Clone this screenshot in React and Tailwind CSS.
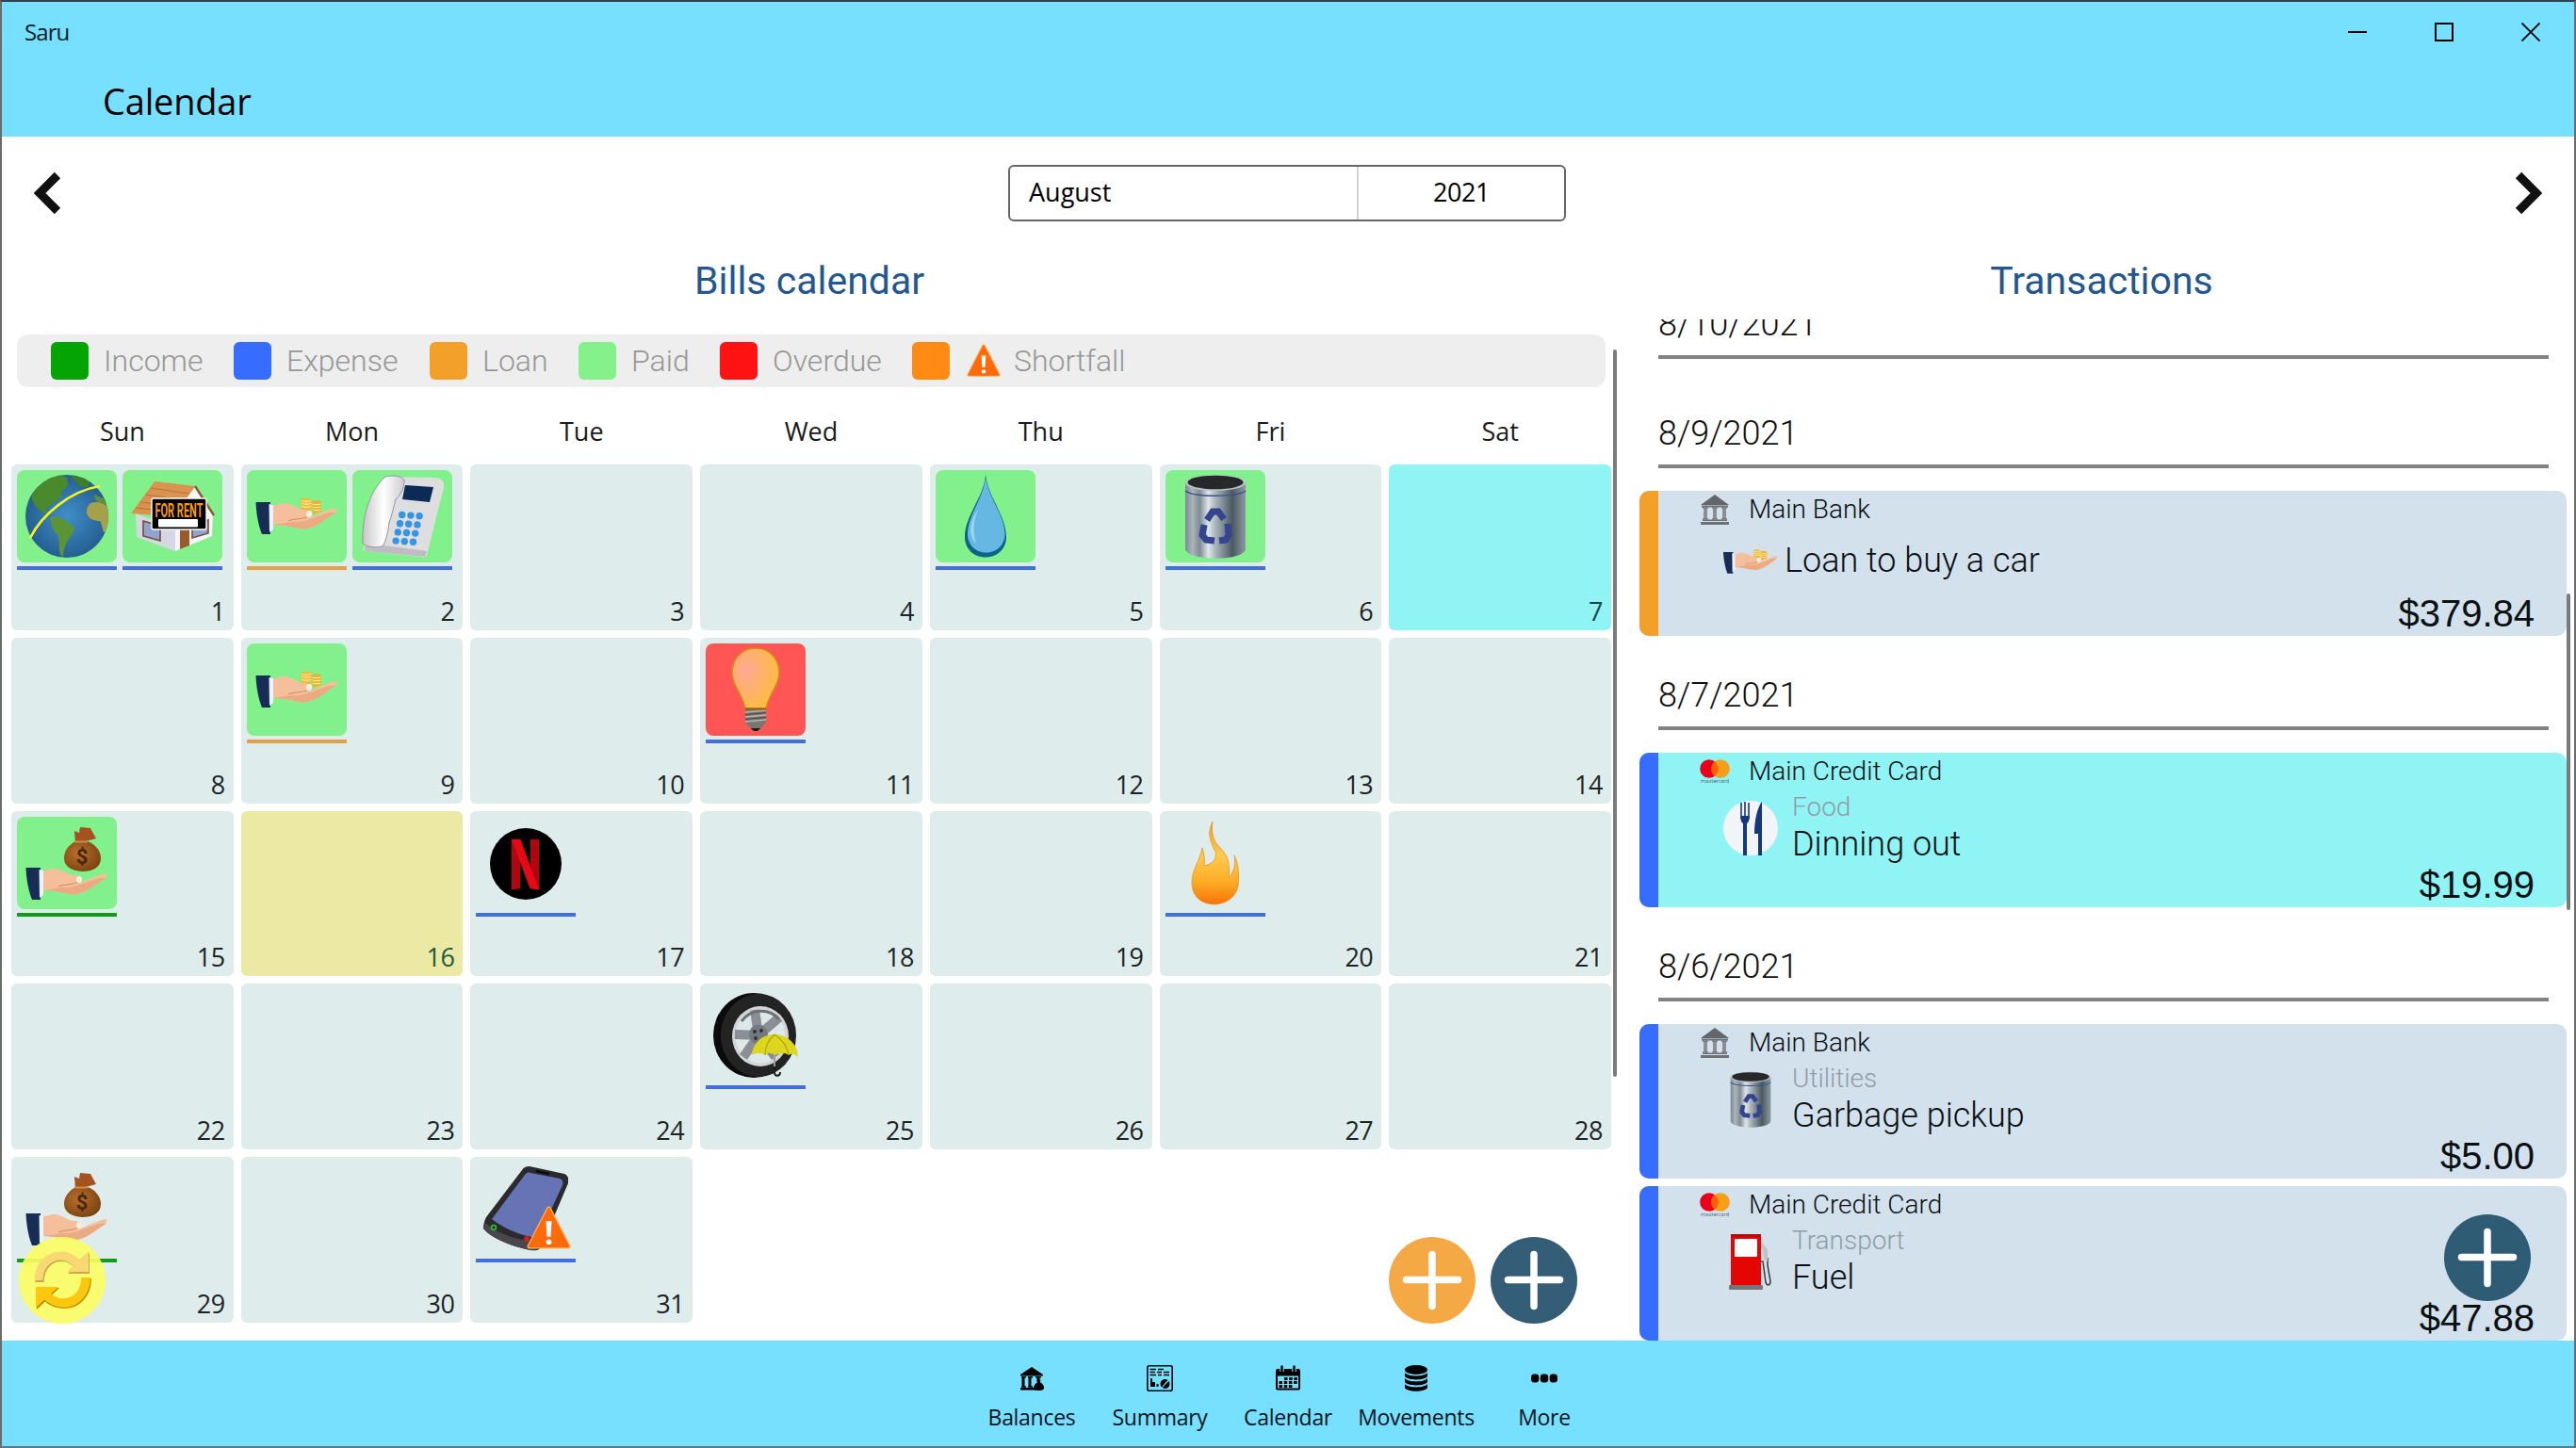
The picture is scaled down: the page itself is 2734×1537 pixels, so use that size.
const Globe = () => (
  <svg viewBox="0 0 90 90" className="w-[90px] h-[90px]">
    <defs>
      <radialGradient id="sea" cx="0.5" cy="0.5" r="0.55">
        <stop offset="0" stopColor="#3f8fc8" />
        <stop offset="1" stopColor="#235a8c" />
      </radialGradient>
      <clipPath id="globeClip"><circle cx="45" cy="45" r="44" /></clipPath>
    </defs>
    <circle cx="45" cy="45" r="44" fill="url(#sea)" />
    <g clipPath="url(#globeClip)">
      <path d="M8 22 C14 12 24 4 36 1 L46 4 C44 8 48 12 44 15 C40 17 38 20 39 24 C35 29 30 30 28 33 C26 36 22 36 22 38 L27 41 L26 44 C18 41 11 36 8 27 Z" fill="#4a8a2c" />
      <path d="M50 2 C58 0 66 4 70 8 L66 14 L58 13 C56 9 52 8 50 2 Z" fill="#3f7d2e" />
      <path d="M28 46 C32 44 36 45 41 48 C46 51 52 54 53 58 C51 64 48 68 45 72 C43 77 41 82 41 88 L38 86 C36 80 38 72 35 65 C31 60 27 54 28 46 Z" fill="#5a9436" />
      <path d="M74 22 L84 26 L88 34 L82 33 C78 30 74 28 74 22 Z" fill="#5f8f3a" />
      <path d="M69 32 C74 28 82 30 90 36 L90 60 L84 62 C82 56 82 53 80 50 C74 50 68 48 66 42 C66 38 66 36 69 32 Z" fill="#a7a04a" />
    </g>
    <path d="M6 68 C18 44 48 18 80 13" fill="none" stroke="#f4f31c" strokeWidth="2.6" />
  </svg>
);

const House = () => (
  <svg viewBox="0 0 90 90" className="w-[90px] h-[90px]">
    <path d="M6 42 L48 58 L48 82 L7 67 Z" fill="#d5d7e2" />
    <path d="M48 58 L52 36 L69 14 L88 42 L87 66 L48 82 Z" fill="#f6f6fa" />
    <path d="M26 8 L69 13 L53 36 L50 46 L1 42 Z" fill="#d9924f" />
    <path d="M22 15 L63 21 M17 22 L58 28 M11 30 L54 35 M6 36 L51 41" stroke="#b8733a" strokeWidth="1" />
    <path d="M69 13 L89 44" stroke="#8a5a35" strokeWidth="2.4" />
    <path d="M14 50 L32 55 L32 71 L14 66 Z" fill="#8fa3cf" stroke="#7a4b32" strokeWidth="1.6" />
    <path d="M66 55 L83 49 L83 63 L66 68 Z" fill="#8fa3cf" stroke="#7a4b32" strokeWidth="1.6" />
    <path d="M53 58 L63 55 L63 76 L53 80 Z" fill="#9a5a2c" />
    <rect x="23" y="26" width="58" height="33" rx="2" fill="#000" stroke="#fff" strokeWidth="1.4" />
    <g transform="translate(52 46) scale(1 1.9)">
      <text x="0" y="0" textAnchor="middle" fontSize="11" fontWeight="700" fill="#f59a16" fontFamily="Roboto, sans-serif">FOR RENT</text>
    </g>
    <rect x="30" y="48" width="42" height="8.5" rx="1" fill="#fff" />
  </svg>
);

const HandShape = () => (
  <>
    <path d="M20 33 C26 33 29 30 35 31.500 C42 33 46 38 54 38 C60 39 62 42 59 45 L54 48 C64 45 74 39 85 36 C88 36 88 40 85 42 C75 48 66 57 53 58.500 C42 58 34 54 20 54 Z" fill="#f5bf9c" />
    <path d="M40 51 C50 52 60 48 70 44 C78 41 82 40 86 41 C75 48 66 57 53 58.500 C42 58 34 54 20 54 Z" fill="#ecaa82" />
    <path d="M36 50 C42 47 52 49 59 44" fill="none" stroke="#d08a64" strokeWidth="1" />
    <ellipse cx="58" cy="42.500" rx="3" ry="3.600" fill="#fdebdd" />
    <path d="M1.500 30 L17 30 L17 64 L8 64 C4 54 2 42 1.500 30 Z" fill="#172d56" />
    <path d="M15.500 32 L20 33 L20 59 L16 62 Z" fill="#eef2fb" />
  </>
);

const CoinsHand = ({ className = 'w-[90px] h-[90px]' }) => (
  <svg viewBox="0 0 90 90" className={className}>
    <HandShape />
    <path d="M49.500 27 Q55 24.500 60.500 27 V38.500 Q57 39.500 49.500 37.500 Z" fill="#f2b93c" />
    <path d="M61 29.500 Q66 27 71 29.500 V40 L62 43 Z" fill="#edb033" />
    <path d="M50 28.500 Q55 30 60 28.500 M50 31.500 Q55 33 60 31.500 M50 34.500 Q55 36 60 34.500 M61.500 32 Q66 33.500 70.500 32 M61.500 35 Q66 36.500 70.500 35 M62 38 Q66 39.500 70.500 38" fill="none" stroke="#ffeb94" strokeWidth="1.300" />
    <ellipse cx="58" cy="42.500" rx="3" ry="3.600" fill="#fdebdd" />
  </svg>
);

const MoneyHand = () => (
  <svg viewBox="0 0 90 90" className="w-[90px] h-[90px]">
    <defs>
      <radialGradient id="bag" cx="0.4" cy="0.4" r="0.65">
        <stop offset="0" stopColor="#b8702f" />
        <stop offset="1" stopColor="#7c4310" />
      </radialGradient>
    </defs>
    <path d="M59 7 L70 8 L76 19 L65 22 L67 24 L54 24 L53 11 L58 13 Z" fill="#a5521f" />
    <path d="M54 22 L67 22 C75 25 81 32 81 40 C81 50 72 54 61 54 C50 53 42 49 42 40 C42 32 47 26 54 22 Z" fill="url(#bag)" />
    <path d="M53 22.500 L67 22.500" stroke="#c99142" strokeWidth="2" />
    <text x="61" y="46" textAnchor="middle" fontSize="22" fontWeight="700" fill="#4a2606" fontFamily="Roboto, sans-serif">$</text>
    <g transform="translate(0 20)"><HandShape /></g>
  </svg>
);

const DeskPhone = () => (
  <svg viewBox="0 0 90 90" className="w-[90px] h-[90px]">
    <defs>
      <linearGradient id="handset" x1="0" x2="1">
        <stop offset="0" stopColor="#c6c6c9" />
        <stop offset="0.500" stopColor="#ffffff" />
        <stop offset="1" stopColor="#cdcdd0" />
      </linearGradient>
    </defs>
    <path d="M28 3 L78 4 C86 4 90 8 89 14 L71 86 C70 89 68 89 65 88 L6 82 C3 81 3 79 4 76 Z" fill="#dedee1" />
    <path d="M26 76 L71 82 L69 88 L6 82 L4 77 Z" fill="#bebec2" />
    <path d="M27 3 C34 1 46 2 47 7 C47 14 44 22 38 27 C36 34 34 44 31 52 C30 62 28 68 25 76 C21 79 7 78 3 74 C2 50 8 20 27 3 Z" fill="url(#handset)" stroke="#97979b" strokeWidth="1" />
    <path d="M48 12 L78 14 L74 30 L45 27 Z" fill="#0b2a55" />
    {[0, 1, 2, 3].map((row) =>
      [0, 1, 2].map((col) => (
        <circle key={`${row}-${col}`} cx={44.7 + col * 9.2 - row * 2.2} cy={43.5 + row * 9.2 + col * 0.6} r="3.700" fill="#3494e6" />
      ))
    )}
  </svg>
);

const Drop = () => (
  <svg viewBox="0 0 90 90" className="w-[90px] h-[90px]">
    <path d="M45 0 C47 24 67 44 67 67 C67 80 57 88.500 45 88.500 C33 88.500 23 80 23 67 C23 44 44 24 45 0 Z" fill="#0d6484" />
    <path d="M45 3 C48 26 65.500 44 65.500 64 C65.500 76 56 83.500 46 83.500 C35 83.500 26 76 26 64 C26 44 43 26 45 3 Z" fill="#66b8e2" />
    <path d="M37 38 C27 52 27 66 35 74 C31 62 32 50 37 38 Z" fill="#9bd6f2" />
  </svg>
);

const TrashCan = ({ className = 'w-[90px] h-[90px]' }) => (
  <svg viewBox="0 0 90 90" className={className}>
    <defs>
      <linearGradient id="steel" x1="0" x2="1">
        <stop offset="0" stopColor="#7d8a91" />
        <stop offset="0.120" stopColor="#aab5bb" />
        <stop offset="0.240" stopColor="#7f8c94" />
        <stop offset="0.380" stopColor="#dfe6ea" />
        <stop offset="0.500" stopColor="#a9b5bb" />
        <stop offset="0.780" stopColor="#4a5962" />
        <stop offset="1" stopColor="#8e9aa1" />
      </linearGradient>
    </defs>
    <path d="M13 10 L77 10 L77 80 C74 93 16 93 13 80 Z" fill="url(#steel)" />
    <ellipse cx="45" cy="9.500" rx="32" ry="8.500" fill="#b9c1c5" />
    <ellipse cx="45" cy="9" rx="29.500" ry="7.300" fill="#26282a" />
    <path d="M13 18 C22 25 68 25 77 18" fill="none" stroke="#3b4c93" strokeWidth="1.500" />
    <g fill="none" stroke="#34448f" strokeWidth="7">
      <path d="M36 49 L42 40 L48 40 L54 48" />
      <path d="M58 53 L59 65 L56 70 L49 71" />
      <path d="M44 71 L35 70 L31 65 L33 54" />
    </g>
  </svg>
);

const Bulb = () => (
  <svg viewBox="0 0 90 90" className="w-[90px] h-[90px]">
    <defs>
      <radialGradient id="glow" cx="0.300" cy="0.380" r="0.650">
        <stop offset="0" stopColor="#ffa795" />
        <stop offset="1" stopColor="#fdbb45" />
      </radialGradient>
    </defs>
    <path d="M45 1 C60 1 70 13 70 27 C70 41 60 47 56 65 L34 65 C30 47 20 41 20 27 C20 13 30 1 45 1 Z" fill="url(#glow)" stroke="#d98a1c" strokeWidth="1.600" />
    <path d="M34 65 H56 V80 L49 88 H41 L34 80 Z" fill="#7b7670" />
    <path d="M34 69 L56 67 M34 74 L56 72 M34 79 L56 77" stroke="#b8b3ab" strokeWidth="1.400" />
    <path d="M34 71.500 L56 69.500 M34 76.500 L56 74.500" stroke="#4c4843" strokeWidth="1.200" />
    <path d="M34 65.500 H56" stroke="#9a5d0c" strokeWidth="2" />
    <path d="M40 86 H50 L47 89 H43 Z" fill="#1d1a17" />
  </svg>
);

const Netflix = () => (
  <svg viewBox="0 0 90 90" className="w-[90px] h-[90px]">
    <circle cx="45" cy="46" r="38" fill="#000" />
    <path d="M30 20 H39 V72 L30 73.500 Z M50 20 H59 V73 L50 72 Z" fill="#b1060f" />
    <path d="M30 20 H39.500 L59 73.500 L49.500 72 Z" fill="#e50914" />
  </svg>
);

const Flame = () => (
  <svg viewBox="0 0 90 90" className="w-[90px] h-[90px]">
    <defs>
      <linearGradient id="fire" x1="0" y1="0" x2="0" y2="1">
        <stop offset="0" stopColor="#f49b2c" />
        <stop offset="0.400" stopColor="#ffcb4e" />
        <stop offset="0.720" stopColor="#fdae27" />
        <stop offset="1" stopColor="#fb7306" />
      </linearGradient>
    </defs>
    <path d="M42 1 C40 14 43 22 50 29 C57 36 61 44 59 61 C64 55 67 47 65 37 C70 46 70 58 69 70 C66 83 54 89 43 89 C28 88 20 79 20 66 C20 52 28 44 31 29 C33 36 34 42 33 48 C42 46 47 41 45 33 C41 24 35 16 42 1 Z" fill="url(#fire)" stroke="#ec8f1f" strokeWidth="0.800" />
  </svg>
);

const Wheel = () => (
  <svg viewBox="0 0 90 90" className="w-[90px] h-[90px]">
    <ellipse cx="43" cy="45" rx="43" ry="45" fill="#0b0b0b" />
    <ellipse cx="48" cy="45" rx="40" ry="44" fill="#232323" />
    <ellipse cx="50" cy="46" rx="30" ry="32" fill="#d2d4d6" />
    <ellipse cx="50" cy="46" rx="26.500" ry="28.500" fill="#dde8e8" />
    <g stroke="#8b8f95" strokeWidth="10">
      <path d="M48 45 L44 18" />
      <path d="M48 45 L70 26" />
      <path d="M48 45 L23 44" />
      <path d="M48 45 L32 68" />
      <path d="M48 45 L66 68" />
    </g>
    <path d="M30 30 A26.500 28.500 0 0 1 70 28" fill="none" stroke="#6d7176" strokeWidth="3" />
    <ellipse cx="48" cy="44" rx="10" ry="10.500" fill="#75797f" />
    <g fill="#2a2d31">
      <circle cx="44" cy="41" r="1.900" /><circle cx="51" cy="40" r="1.900" /><circle cx="45" cy="48" r="1.900" />
    </g>
    <path d="M65 64 V84 C65 89 71 89 71 84" fill="none" stroke="#1b1b1b" strokeWidth="2" />
    <path d="M65 64 V78" stroke="#b9bcc0" strokeWidth="1.600" />
    <path d="M41 66 C42 53 52 44 65 44 C78 44 90 54 90 68 C86 64 83 64 80 66 C76 63 70 63 66 66 C61 63 58 63 55 66 C50 63 46 63 41 66 Z" fill="#dcd61d" />
    <path d="M65 44 C58 50 55 58 55 66 M65 44 C74 50 79 58 80 66" fill="none" stroke="#aaa40f" strokeWidth="1.200" />
  </svg>
);

const Warning = ({ className }) => (
  <svg viewBox="0 0 46 46" className={className}>
    <path d="M23 3 L43 42 H3 Z" fill="#ff6a0a" stroke="#ffb25c" strokeWidth="5" strokeLinejoin="round" />
    <path d="M23 3 L43 42 H3 Z" fill="#ff6a0a" stroke="#ff6a0a" strokeWidth="2.500" strokeLinejoin="round" />
    <path d="M20 16 H26 L25 32 H21 Z" fill="#fff" />
    <circle cx="23" cy="37.500" r="2.800" fill="#fff" />
  </svg>
);

const Smartphone = () => (
  <div className="relative w-[90px] h-[90px]">
    <svg viewBox="0 0 90 90" className="w-[90px] h-[90px]">
      <path d="M49 0 L86 8 C90 10 91 13 90 18 L62 84 C60 89 56 90 50 89 C30 85 8 76 0 66 C0 62 1 58 3 54 L41 4 C43 1 45 0 49 0 Z" fill="#2b2b2e" />
      <path d="M2 60 C16 72 38 80 60 80 L58 87 C54 90 50 89 46 88 C28 84 8 76 0 66 Z" fill="#48484c" />
      <path d="M50 7 L81 13 C84 14 85 17 84 20 L58 76 C40 74 22 66 9 56 L44 9 C46 7 47 6 50 7 Z" fill="#6673b5" />
      <path d="M56 5 L70 8" stroke="#0c0c0e" strokeWidth="2.500" />
      <circle cx="11" cy="65" r="2.400" fill="none" stroke="#2fc431" strokeWidth="1.500" />
      <circle cx="46" cy="77" r="3" fill="#d81b1b" />
    </svg>
    <Warning className="absolute left-[46px] top-[42px] w-[47px] h-[47px]" />
  </div>
);

const BankIcon = () => (
  <svg viewBox="0 0 32 32" className="w-8 h-8">
    <path d="M16 0 L31 11 H1 Z" fill="#63666b" />
    <path d="M2 11.500 H30 V13.500 H2 Z M1 29 H31 V32 H1 Z M3 26.500 H29 V28 H3 Z" fill="#6d7075" />
    <path d="M4 14 H8 V26 H4 Z M14 14 H18 V26 H14 Z M24 14 H28 V26 H24 Z" fill="#8b8e92" />
    <path d="M3 14 H9 M13 14 H19 M23 14 H29 M3 26 H9 M13 26 H19 M23 26 H29" stroke="#76797e" strokeWidth="1.500" />
  </svg>
);

const Mastercard = () => (
  <svg viewBox="0 0 32 32" className="w-8 h-8">
    <circle cx="10" cy="13" r="9.800" fill="#eb001b" />
    <circle cx="22" cy="13" r="9.800" fill="#f79e1b" />
    <path d="M16 5.300 A9.800 9.800 0 0 1 16 20.700 A9.800 9.800 0 0 1 16 5.300 Z" fill="#ff5f00" />
    <text x="16" y="28" textAnchor="middle" textLength="30" fontSize="6" fill="#2c3a44" fontFamily="Roboto, sans-serif">mastercard</text>
  </svg>
);

const Cutlery = () => (
  <svg viewBox="0 0 60 60" className="w-[60px] h-[60px]">
    <circle cx="30" cy="30" r="29" fill="#f1f5f8" />
    <path d="M20 3 V20 M24 2 V20 M28 3 V20" stroke="#17377c" strokeWidth="1.600" />
    <path d="M19.500 17 H28.500 C29 23 27 24.500 26 25 V59 H22 V25 C21 24.500 19 23 19.500 17 Z" fill="#17377c" />
    <path d="M42 2 V59 H38 V36 H34 C34 22 37 8 42 2 Z" fill="#17377c" />
  </svg>
);

const FuelPump = () => (
  <svg viewBox="0 0 60 60" className="w-[60px] h-[60px]">
    <path d="M40 30 H43 L46 52 C47 56 51 56 51 51 L48 34 V26" fill="none" stroke="#3c3c40" strokeWidth="1.500" />
    <path d="M40 8 L48 17 L48 30 L44 28 L43 18 L40 12 Z" fill="#bfc3c6" />
    <rect x="9" y="1" width="32" height="55" rx="1.500" fill="#e50505" />
    <path d="M9 1 H41 V4 H9 Z" fill="#b90a0a" />
    <rect x="13" y="6" width="24" height="19" rx="1" fill="#fff" />
    <rect x="7" y="55" width="36" height="5" rx="1" fill="#757575" />
  </svg>
);

const PlusIcon = () => (
  <svg viewBox="0 0 92 92" className="w-[92px] h-[92px]">
    <path d="M46 18.500 V73.500 M18.500 45.500 H73.500" stroke="#fff" strokeWidth="7.500" strokeLinecap="round" />
  </svg>
);

const Chevron = ({ className }) => (
  <svg viewBox="0 0 30 46" className={className}>
    <path d="M25 4 L6 23 L25 42" fill="none" stroke="#111" strokeWidth="9" />
  </svg>
);

const BalancesIcon = () => (
  <svg viewBox="0 0 28 28" className="w-7 h-7">
    <path d="M14 2 L26 10 V11.500 H2 V10 Z M3 24 H18 V26.500 H2 V24 Z" />
    <path d="M5 13 V23 M12 13 V23 M21 13 V18" stroke="#000" strokeWidth="3" />
    <path d="M3 12.800 H8 M10 12.800 H15 M18 12.800 H24 M3 23 H8 M10 23 H15" stroke="#000" strokeWidth="1.400" />
    <path d="M19.500 15.500 H23.500 L22.800 18 C26 20 27 22 27 24 C27 26 25.500 27 21.500 27 C17.500 27 16 26 16 24 C16 22 17.500 20 20.200 18 Z" />
  </svg>
);

const SummaryIcon = () => (
  <svg viewBox="0 0 28 28" className="w-7 h-7">
    <rect x="0.800" y="0.800" width="26.400" height="26.400" rx="2" fill="none" stroke="#000" strokeWidth="1.600" />
    <path d="M3.500 4.500 H10 M12 4.500 H18 M3.500 7.500 H9 M11 7.500 H16 M18 7.500 H24 M3.500 10.500 H10 M12 10.500 H16 M18 10.500 H24" stroke="#000" strokeWidth="1.300" />
    <path d="M4 14 H6 V18 H9 V23 H4 Z M10.500 20 H12.500 V23 H10.500 Z" />
    <circle cx="19.500" cy="20" r="5" />
    <path d="M19.500 20 L24 15.500 M19.500 20 L16.500 24" stroke="#77dfff" strokeWidth="1.200" />
  </svg>
);

const CalendarIcon = () => (
  <svg viewBox="0 0 28 28" className="w-7 h-7">
    <path d="M3 4 H25 C26.500 4 27 5 27 6 V24.500 C27 26 26 26.500 25 26.500 H3 C1.500 26.500 1 25.500 1 24.500 V6 C1 5 1.500 4 3 4 Z" />
    <path d="M3 11.500 H25 V24.500 H3 Z" fill="#77dfff" />
    <path d="M7.500 1.500 V7 M20.500 1.500 V7" stroke="#77dfff" strokeWidth="4.500" />
    <path d="M7.500 1.500 V6.500 M20.500 1.500 V6.500" stroke="#000" strokeWidth="2.400" strokeLinecap="round" />
    <path d="M10 14.500 H24 M4.500 18.500 H24 M4.500 22.500 H19" stroke="#000" strokeWidth="2.800" strokeDasharray="3.500 1.700" />
  </svg>
);

const MovementsIcon = () => (
  <svg viewBox="0 0 28 28" className="w-7 h-7">
    <ellipse cx="14" cy="5" rx="12" ry="5" />
    <path d="M2 8 C5 12.500 23 12.500 26 8 V12 C23 16.500 5 16.500 2 12 Z M2 14 C5 18.500 23 18.500 26 14 V18 C23 22.500 5 22.500 2 18 Z M2 20 C5 24.500 23 24.500 26 20 V24 C23 29 5 29 2 24 Z" />
  </svg>
);

const MoreIcon = () => (
  <svg viewBox="0 0 28 28" className="w-7 h-7">
    <rect x="0" y="9.500" width="8.400" height="9" rx="3.400" />
    <rect x="9.800" y="9.500" width="8.400" height="9" rx="3.400" />
    <rect x="19.600" y="9.500" width="8.400" height="9" rx="3.400" />
  </svg>
);

const RefreshIcon = () => (
  <svg viewBox="0 0 92 92" className="w-[92px] h-[92px]">
    <path d="M22 48 C22 30 34 20 48 21 C54 22 59 25 64 31" fill="none" stroke="#c9a94e" strokeWidth="9.500" />
    <path d="M75 17 V39 H52 Z" fill="#c9a94e" />
    <path d="M21 46 C21 29 33 19 47 20 C53 21 58 24 63 30" fill="none" stroke="#f7d873" strokeWidth="9" />
    <path d="M74 15 V37 H51 Z" fill="#f7d873" />
    <path d="M72 44 C72 60 62 71 48 71 C41 71 35 69 29 63" fill="none" stroke="#b98e0c" strokeWidth="10" />
    <path d="M19 77 V54 H43 Z" fill="#b98e0c" />
    <path d="M71 43 C71 59 61 70 47 70 C40 70 34 67 28 61" fill="none" stroke="#fcc80d" strokeWidth="9.500" />
    <path d="M18 75 V53 H42 Z" fill="#fcc80d" />
  </svg>
);

const legend = [
  { label: 'Income', color: 'bg-[#05a405]', width: 'w-[194px]' },
  { label: 'Expense', color: 'bg-[#366cff]', width: 'w-[208px]' },
  { label: 'Loan', color: 'bg-[#f3a02a]', width: 'w-[158px]' },
  { label: 'Paid', color: 'bg-[#85f18a]', width: 'w-[150px]' },
  { label: 'Overdue', color: 'bg-[#ff1212]', width: 'w-[204px]' },
  { label: 'Shortfall', color: 'bg-[#ff8a14]', width: 'w-[260px]', warn: true },
];

const weekdays = ['Sun', 'Mon', 'Tue', 'Wed', 'Thu', 'Fri', 'Sat'];

const PAID = 'bg-[#83f18b]';
const OVERDUE = 'bg-[#ff5555]';
const EXPENSE = 'bg-[#416fdc]';
const LOAN = 'bg-[#e2a148]';
const INCOME = 'bg-[#149a1b]';

const bills = {
  1: [{ icon: Globe, tile: PAID, line: EXPENSE }, { icon: House, tile: PAID, line: EXPENSE }],
  2: [{ icon: CoinsHand, tile: PAID, line: LOAN }, { icon: DeskPhone, tile: PAID, line: EXPENSE }],
  5: [{ icon: Drop, tile: PAID, line: EXPENSE }],
  6: [{ icon: TrashCan, tile: PAID, line: EXPENSE }],
  9: [{ icon: CoinsHand, tile: PAID, line: LOAN }],
  11: [{ icon: Bulb, tile: OVERDUE, line: EXPENSE }],
  15: [{ icon: MoneyHand, tile: PAID, line: INCOME }],
  17: [{ icon: Netflix, tile: '', line: EXPENSE }],
  20: [{ icon: Flame, tile: '', line: EXPENSE }],
  25: [{ icon: Wheel, tile: '', line: EXPENSE }],
  29: [{ icon: MoneyHand, tile: '', line: INCOME }],
  31: [{ icon: Smartphone, tile: '', line: EXPENSE }],
};

const dayStyles = {
  7: 'bg-[#90f4f4] text-[#12494b]',
  16: 'bg-[#ece9a4] text-[#1c5a41]',
};

const groups = [
  { date: '8/10/2021', items: [] },
  {
    date: '8/9/2021',
    items: [
      { account: 'Main Bank', bank: true, title: 'Loan to buy a car', amount: '$379.84', icon: <CoinsHand className="w-[60px] h-[60px]" />, bar: 'bg-[#f3a02a]', bg: 'bg-[#d2e1ec]' },
    ],
  },
  {
    date: '8/7/2021',
    items: [
      { account: 'Main Credit Card', category: 'Food', title: 'Dinning out', amount: '$19.99', icon: <Cutlery />, bar: 'bg-[#366cff]', bg: 'bg-[#90f4f5]' },
    ],
  },
  {
    date: '8/6/2021',
    items: [
      { account: 'Main Bank', bank: true, category: 'Utilities', title: 'Garbage pickup', amount: '$5.00', icon: <TrashCan className="w-[60px] h-[60px]" />, bar: 'bg-[#366cff]', bg: 'bg-[#d2e1ec]' },
      { account: 'Main Credit Card', category: 'Transport', title: 'Fuel', amount: '$47.88', icon: <FuelPump />, bar: 'bg-[#366cff]', bg: 'bg-[#d2e1ec]' },
    ],
  },
];

const navItems = [
  { label: 'Balances', icon: BalancesIcon },
  { label: 'Summary', icon: SummaryIcon },
  { label: 'Calendar', icon: CalendarIcon },
  { label: 'Movements', icon: MovementsIcon },
  { label: 'More', icon: MoreIcon },
];

const DayCell = ({ day }) => (
  <div className={`flex flex-col justify-between rounded-md p-1.5 ${dayStyles[day] || 'bg-[#deedec] text-[#1c2425]'}`}>
    <div className="flex gap-1.5">
      {(bills[day] || []).map((bill, i) => (
        <div key={i} className="flex flex-col gap-1">
          <div className={`flex items-center justify-center w-[106px] h-[98px] rounded-lg ${bill.tile}`}>
            <bill.icon />
          </div>
          <div className={`h-1 ${bill.line}`} />
        </div>
      ))}
    </div>
    <span className="self-end pr-[3px] text-[27px] leading-[29px] tracking-[-0.5px]">{day}</span>
  </div>
);

const TransactionCard = ({ item }) => (
  <div className={`flex rounded-[10px] overflow-hidden ${item.bg}`}>
    <div className={`w-5 shrink-0 ${item.bar}`} />
    <div className="flex-1 pb-[3px] text-[#0b1013]">
      <div className="flex items-center h-10 gap-5 pl-11">
        {item.bank ? <BankIcon /> : <Mastercard />}
        <span className="text-[28px] leading-9">{item.account}</span>
      </div>
      <div className={`flex items-center min-h-[69px] pl-[68px] ${item.category ? 'gap-3.5' : 'gap-1.5'}`}>
        {item.icon}
        <div>
          {item.category && <div className="text-[28px] leading-9 text-[#8f9ea6]">{item.category}</div>}
          <div className="text-[36px] leading-[43px]">{item.title}</div>
        </div>
      </div>
      <div className="pr-[34px] text-right font-['Liberation_Sans',sans-serif] text-[40px] leading-[42px] font-normal">{item.amount}</div>
    </div>
  </div>
);

const App = () => (
  <div className="flex flex-col w-[2734px] h-[1537px] overflow-hidden bg-white border-2 border-t-[#2c4350] border-x-[#6b6b6b] border-b-[#5d7a87] font-['Open_Sans',sans-serif] text-black">
    {/* Title bar */}
    <header className="h-[143px] bg-[#77dfff]">
      <div className="flex items-center justify-between h-16 pl-6 pr-9">
        <span className="text-[24px] leading-8 tracking-[-0.9px] text-[#0d1b22]">Saru</span>
        <div className="flex items-center gap-[72px]">
          <svg viewBox="0 0 20 20" className="w-5 h-5"><path d="M0 10 H20" stroke="#000" strokeWidth="2" /></svg>
          <svg viewBox="0 0 20 20" className="w-5 h-5"><rect x="1" y="1" width="18" height="18" fill="none" stroke="#000" strokeWidth="2" /></svg>
          <svg viewBox="0 0 20 20" className="w-5 h-5"><path d="M0.500 0.500 L19.500 19.500 M19.500 0.500 L0.500 19.500" stroke="#000" strokeWidth="1.800" /></svg>
        </div>
      </div>
      <h1 className="flex items-center h-[79px] pt-0.5 pl-[107px] text-[38px] leading-none tracking-[-0.2px]">Calendar</h1>
    </header>

    {/* Month picker */}
    <div className="flex items-center justify-between h-[120px] shrink-0 pl-[34px] pr-[34px]">
      <Chevron className="w-[30px] h-[46px]" />
      <div className="flex w-[592px] h-[60px] border-2 border-[#666] rounded-md text-[27px] leading-[54px] -translate-x-px">
        <span className="w-[370px] pl-5 border-r-2 border-[#d2d2d2]">August</span>
        <span className="flex-1 text-center tracking-[-0.5px]">2021</span>
      </div>
      <Chevron className="w-[30px] h-[46px] rotate-180" />
    </div>

    <main className="relative flex flex-1 min-h-0">
      {/* Bills calendar */}
      <section className="w-[1714px]">
        <h2 className="text-center font-['Roboto',sans-serif] text-[41px] leading-[66px] text-[#24568f]">Bills calendar</h2>
        <div className="flex items-center w-[1686px] h-14 mt-6 ml-4 pl-9 rounded-xl bg-[#eeeeee] font-['Roboto',sans-serif] font-light text-[32px] text-[#979797]">
          {legend.map((item) => (
            <div key={item.label} className={`flex items-center ${item.warn ? 'gap-3.5' : 'gap-4'} ${item.width}`}>
              <span className={`w-10 h-10 shrink-0 rounded-md ${item.color}`} />
              {item.warn && <Warning className="w-9 h-9 shrink-0 ml-1" />}
              <span className="leading-10">{item.label}</span>
            </div>
          ))}
        </div>
        <div className="grid grid-cols-7 gap-2 items-center w-[1698px] h-[82px] ml-2.5 pt-3 text-center text-[27px] text-[#1b1b1b]">
          {weekdays.map((name) => <span key={name}>{name}</span>)}
        </div>
        <div className="grid grid-cols-7 grid-rows-5 gap-2 w-[1698px] h-[911px] ml-2.5">
          {Array.from({ length: 31 }, (_, i) => <DayCell key={i} day={i + 1} />)}
        </div>
      </section>

      {/* Transactions */}
      <section className="flex flex-col flex-1 min-w-0 font-['Roboto',sans-serif]">
        <h2 className="pl-[13px] text-center text-[41px] leading-[66px] text-[#24568f]">Transactions</h2>
        <div className="flex-1 min-h-0 mt-2 pl-6 pr-2 overflow-hidden font-light">
          <div className="-mt-[58px]">
            {groups.map((group) => (
              <div key={group.date} className={group.items.length ? '' : 'pb-4'}>
                <div className="flex items-end h-[100px] ml-5 mr-[19px] pb-3 border-b-4 border-[#828282] text-[36px] leading-[42px] text-[#111]">{group.date}</div>
                {group.items.length > 0 && (
                  <div className="flex flex-col gap-2 mt-6">
                    {group.items.map((item) => <TransactionCard key={item.amount} item={item} />)}
                  </div>
                )}
              </div>
            ))}
          </div>
        </div>
      </section>

      {/* Scroll thumbs */}
      <div className="absolute left-[1710px] top-[106px] w-1 h-[772px] rounded-full bg-[#7b7b7b]" />
      <div className="absolute left-[2722px] top-[365px] w-1 h-[336px] rounded-full bg-[#7b7b7b]" />

      {/* Floating buttons */}
      <button className="absolute left-[18px] bottom-[18px] w-[92px] h-[92px] rounded-full bg-[#fdfd62]/90"><RefreshIcon /></button>
      <button className="absolute left-[1472px] bottom-[18px] w-[92px] h-[92px] rounded-full bg-[#f5a945]"><PlusIcon /></button>
      <button className="absolute left-[1580px] bottom-[18px] w-[92px] h-[92px] rounded-full bg-[#345e77]"><PlusIcon /></button>
      <button className="absolute left-[2592px] bottom-[42px] w-[92px] h-[92px] rounded-full bg-[#2f5c75]"><PlusIcon /></button>
    </main>

    {/* Bottom tabs */}
    <nav className="flex justify-center h-28 shrink-0 bg-[#77dfff]">
      {navItems.map((item) => (
        <div key={item.label} className="flex flex-col items-center gap-[11px] w-[136px] pt-[26px]">
          <item.icon />
          <span className="text-[23px] leading-8 tracking-[-0.3px] text-[#0a1418]">{item.label}</span>
        </div>
      ))}
    </nav>
  </div>
);

export default App;
